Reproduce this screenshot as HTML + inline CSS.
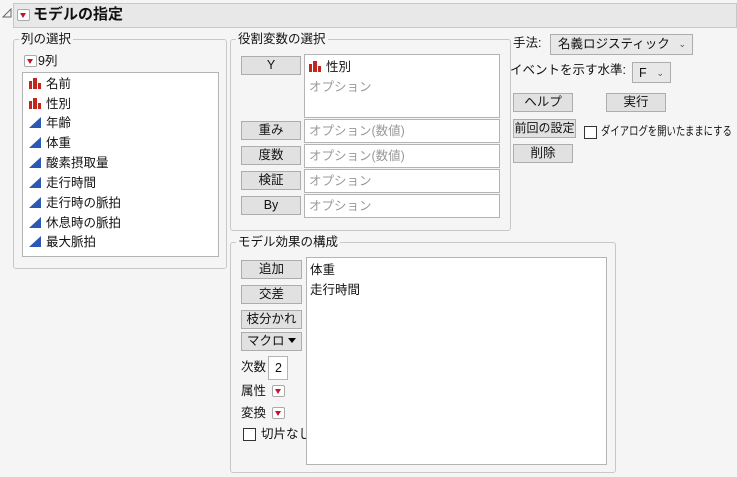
<!DOCTYPE html><html><head><meta charset="utf-8"><style>
*{box-sizing:border-box}
body{margin:0;width:737px;height:477px;background:#f5f5f5;font-family:"Liberation Sans","Noto Sans CJK JP",sans-serif;font-size:12.5px;color:#111;position:relative;overflow:hidden;white-space:nowrap}
.a{position:absolute}
.grp{position:absolute;border:1px solid #c8c8c8;border-radius:3px}
.lg{position:absolute;top:-9px;left:5px;background:#f5f5f5;padding:0 2px;line-height:16px}
.btn{position:absolute;background:#e1e1e1;border:1px solid #adadad;text-align:center;line-height:16px}
.box{position:absolute;background:#fff;border:1px solid #b4b4b4}
.ph{color:#999}
.rm{position:absolute;width:13px;height:12px;border:1px solid #aaa;border-radius:2px;background:#fff}
.rm:after{content:"";position:absolute;left:2px;top:3px;border-left:3.5px solid transparent;border-right:3.5px solid transparent;border-top:5px solid #c8102e}
.it{position:absolute;left:6px;line-height:16px}
.it svg{margin-right:5px;vertical-align:-1px}
.cb{position:absolute;width:13px;height:13px;border:1px solid #333;background:#fff}
</style></head><body>
<svg class="a" style="left:2px;top:8px" width="10" height="10"><path d="M1 9 L9 1 L9 9 Z" fill="none" stroke="#666" stroke-width="1"/></svg>
<div class="a" style="left:13px;top:3px;width:724px;height:25px;background:#e8e8e8;border:1px solid #c8c8c8"></div>
<div class="rm" style="left:17px;top:9px"></div>
<div class="a" style="left:33px;top:5px;font-size:15px;font-weight:bold;line-height:20px">モデルの指定</div>

<div class="grp" style="left:13px;top:39px;width:214px;height:230px"><div class="lg">列の選択</div></div>
<div class="rm" style="left:24px;top:55px"></div>
<div class="a" style="left:38px;top:53px;line-height:16px">9列</div>
<div class="box" style="left:22px;top:72px;width:197px;height:185px">
<div class="it" style="top:3px"><svg width="12" height="11"><path d="M0 3h3v8H0zM4 0h4v11H4zM9 5h3v6H9z" fill="#c0271d"/></svg>名前</div>
<div class="it" style="top:23px"><svg width="12" height="11"><path d="M0 3h3v8H0zM4 0h4v11H4zM9 5h3v6H9z" fill="#c0271d"/></svg>性別</div>
<div class="it" style="top:42px"><svg width="12" height="11"><path d="M0 11L12 0V11Z" fill="#2b57b5"/></svg>年齢</div>
<div class="it" style="top:62px"><svg width="12" height="11"><path d="M0 11L12 0V11Z" fill="#2b57b5"/></svg>体重</div>
<div class="it" style="top:82px"><svg width="12" height="11"><path d="M0 11L12 0V11Z" fill="#2b57b5"/></svg>酸素摂取量</div>
<div class="it" style="top:102px"><svg width="12" height="11"><path d="M0 11L12 0V11Z" fill="#2b57b5"/></svg>走行時間</div>
<div class="it" style="top:122px"><svg width="12" height="11"><path d="M0 11L12 0V11Z" fill="#2b57b5"/></svg>走行時の脈拍</div>
<div class="it" style="top:142px"><svg width="12" height="11"><path d="M0 11L12 0V11Z" fill="#2b57b5"/></svg>休息時の脈拍</div>
<div class="it" style="top:161px"><svg width="12" height="11"><path d="M0 11L12 0V11Z" fill="#2b57b5"/></svg>最大脈拍</div>
</div>

<div class="grp" style="left:230px;top:39px;width:281px;height:192px"><div class="lg">役割変数の選択</div></div>
<div class="btn" style="left:241px;top:56px;width:60px;height:19px">Y</div>
<div class="box" style="left:304px;top:54px;width:196px;height:64px"><div class="it" style="left:4px;top:4px"><svg width="12" height="11"><path d="M0 3h3v8H0zM4 0h4v11H4zM9 5h3v6H9z" fill="#c0271d"/></svg>性別</div><div class="it ph" style="left:4px;top:24px">オプション</div></div>
<div class="btn" style="left:241px;top:121px;width:60px;height:19px">重み</div>
<div class="box" style="left:304px;top:119px;width:196px;height:24px"><div class="it ph" style="left:4px;top:3px">オプション(数値)</div></div>
<div class="btn" style="left:241px;top:146px;width:60px;height:19px">度数</div>
<div class="box" style="left:304px;top:144px;width:196px;height:24px"><div class="it ph" style="left:4px;top:3px">オプション(数値)</div></div>
<div class="btn" style="left:241px;top:171px;width:60px;height:19px">検証</div>
<div class="box" style="left:304px;top:169px;width:196px;height:24px"><div class="it ph" style="left:4px;top:3px">オプション</div></div>
<div class="btn" style="left:241px;top:196px;width:60px;height:19px">By</div>
<div class="box" style="left:304px;top:194px;width:196px;height:24px"><div class="it ph" style="left:4px;top:3px">オプション</div></div>

<div class="a" style="left:513px;top:35px;line-height:16px">手法:</div>
<div class="a" style="left:550px;top:34px;width:143px;height:21px;background:#e8e8e8;border:1px solid #adadad;padding-left:7px;line-height:19px">名義ロジスティック<span style="position:absolute;right:6px;font-size:9px;color:#555">&#8964;</span></div>
<div class="a" style="left:510px;top:62px;line-height:16px">イベントを示す水準:</div>
<div class="a" style="left:632px;top:62px;width:39px;height:21px;background:#e8e8e8;border:1px solid #adadad;padding-left:6px;line-height:20px">F<span style="position:absolute;right:6px;font-size:9px;color:#555">&#8964;</span></div>
<div class="btn" style="left:513px;top:93px;width:60px;height:19px">ヘルプ</div>
<div class="btn" style="left:606px;top:93px;width:60px;height:19px">実行</div>
<div class="btn" style="left:513px;top:119px;width:63px;height:19px;font-size:12px">前回の設定</div>
<div class="cb" style="left:584px;top:126px"></div>
<div class="a" style="left:601px;top:123px;line-height:16px;font-size:12px;transform:scaleX(0.78);transform-origin:0 0">ダイアログを開いたままにする</div>
<div class="btn" style="left:513px;top:144px;width:60px;height:19px">削除</div>

<div class="grp" style="left:230px;top:242px;width:386px;height:231px"><div class="lg">モデル効果の構成</div></div>
<div class="btn" style="left:241px;top:260px;width:61px;height:19px">追加</div>
<div class="btn" style="left:241px;top:285px;width:61px;height:19px">交差</div>
<div class="btn" style="left:241px;top:310px;width:61px;height:19px">枝分かれ</div>
<div class="btn" style="left:241px;top:332px;width:61px;height:19px">マクロ <span style="display:inline-block;border-left:4px solid transparent;border-right:4px solid transparent;border-top:5px solid #000;vertical-align:2px"></span></div>
<div class="a" style="left:241px;top:359px;line-height:16px">次数</div>
<div class="box" style="left:268px;top:356px;width:20px;height:24px;padding-left:6px;line-height:22px">2</div>
<div class="a" style="left:241px;top:383px;line-height:16px">属性</div>
<div class="rm" style="left:272px;top:385px"></div>
<div class="a" style="left:241px;top:405px;line-height:16px">変換</div>
<div class="rm" style="left:272px;top:407px"></div>
<div class="cb" style="left:243px;top:428px"></div>
<div class="a" style="left:261px;top:426px;line-height:16px">切片なし</div>
<div class="box" style="left:306px;top:257px;width:301px;height:208px"><div class="it" style="left:3px;top:4px">体重</div><div class="it" style="left:3px;top:24px">走行時間</div></div>
</body></html>
